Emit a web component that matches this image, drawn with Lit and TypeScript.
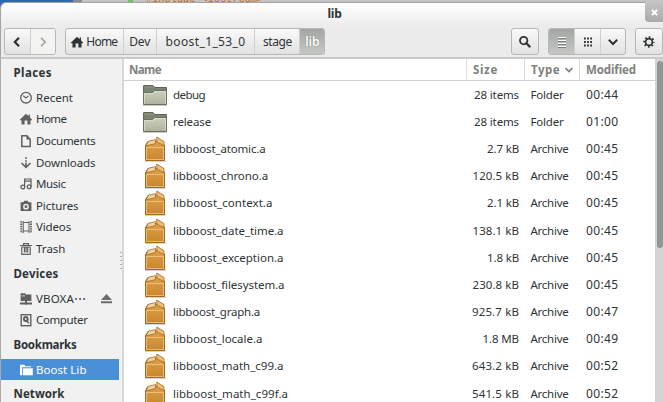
import { LitElement, html, css, svg, nothing } from "lit";
import { customElement } from "lit/decorators.js";

const label = (text: string, width: number, cls = "") =>
  html`<span class="t ${cls}" data-w=${width}>${text}</span>`;

const shapes: Record<string, unknown> = {
  recent: svg`<circle cx="6" cy="5.7" r="5.3" fill="none" stroke="currentColor" stroke-width="1.3"/><path d="M3.2 3.7 6 6 8.6 3.9" fill="none" stroke="currentColor" stroke-width="1.1"/>`,
  home: svg`<path d="M6 .8 0 6.4V7.2H1.5V11.5H4.6V7.5H7.4V11.5H10.5V7.2H12V6.4L10 4.5V1.6H8.6V3.2Z" fill="currentColor"/>`,
  documents: svg`<path d="M1.8.8H6.8L10.2 4.2V11.4H1.8Z" fill="none" stroke="currentColor" stroke-width="1.5"/><path d="M6.5.8V4.5H10.2Z" fill="currentColor"/>`,
  downloads: svg`<path d="M6 .3V2M6 3.3V4.7M6 5.6V10M1.5 6 6 10.3 10.5 6" fill="none" stroke="currentColor" stroke-width="1.6"/>`,
  music: svg`<path d="M4.6 9.3V1H11V8.7M4.6 3.2H11" fill="none" stroke="currentColor" stroke-width="1.2"/><circle cx="2.8" cy="9" r="1.9" fill="none" stroke="currentColor" stroke-width="1.3"/><circle cx="9.2" cy="8.8" r="1.9" fill="none" stroke="currentColor" stroke-width="1.3"/>`,
  pictures: svg`<path fill-rule="evenodd" d="M.6 2.3H3.4L4.2.8H7.8L8.6 2.3H11.4V11H.6ZM6 3.8A2.9 2.9 0 1 0 6 9.6 2.9 2.9 0 1 0 6 3.8ZM6 5.3A1.4 1.4 0 1 1 6 8.1 1.4 1.4 0 1 1 6 5.3Z" fill="currentColor"/>`,
  videos: svg`<path d="M3.2.3V12M9 .3V12M3 1.5H9M3 10H9" fill="none" stroke="currentColor" stroke-width="1.1"/><path d="M1.2.3V12M11 .3V12" stroke="currentColor" stroke-width="2" stroke-dasharray="1.3 1"/>`,
  trash: svg`<path d="M0 2.5H12M3.6 2V.7H8.4V2M1.8 4V11.3H10.2V4M4.5 4.6V9.5M6.1 4.6V9.5M7.7 4.6V9.5M1.5 4H10.5" fill="none" stroke="currentColor" stroke-width="1.2"/>`,
  netdrive: svg`<path d="M.6.2H5L6 1.6H11.4V8H.6Z" fill="currentColor"/><path d="M1.5 2.9H5" stroke="#f1f1f1" stroke-width=".8"/><path d="M0 10.5H12M6 8V11.8" stroke="currentColor" stroke-width="1.9"/>`,
  computer: svg`<rect x="1.2" y=".7" width="9.6" height="11" fill="none" stroke="currentColor" stroke-width="1.4"/><circle cx="5.8" cy="5" r="2.9" fill="currentColor"/><circle cx="5.8" cy="5" r=".9" fill="#f1f1f1"/><path d="M6.3 6.5 8.8 9.3" stroke="currentColor" stroke-width="1.5"/>`,
  folder: svg`<path d="M0 11.3V.8H4.4L5.4 2.2H11V3.3H2V11.3Z" fill="currentColor"/><path d="M2.8 4.3H12.8V11.3H2.8Z" fill="currentColor"/>`,
  back: svg`<path d="M8 1.8 3.8 6 8 10.2" fill="none" stroke="currentColor" stroke-width="2.2"/>`,
  forward: svg`<path d="M4 1.8 8.2 6 4 10.2" fill="none" stroke="currentColor" stroke-width="1.7"/>`,
  search: svg`<circle cx="4.7" cy="4.6" r="3.7" fill="none" stroke="currentColor" stroke-width="1.8"/><path d="M7.4 7.3 11.3 11.2" stroke="currentColor" stroke-width="2.3"/>`,
  list: svg`<path d="M2 2.5H10M2 5.5H10M2 8.5H10M2 11.5H10" stroke="#7d817d" stroke-width="1"/><path d="M2 1.5H10M2 4.5H10M2 7.5H10M2 10.5H10" stroke="#fff" stroke-width="1.2"/>`,
  grid: svg`<path d="M2 2.5H10M2 6H10M2 9.5H10" stroke="currentColor" stroke-width="1.8" stroke-dasharray="1.8 1.3"/>`,
  down: svg`<path d="M1.8 3.8 6 8 10.2 3.8" fill="none" stroke="currentColor" stroke-width="2"/>`,
  gear: svg`<circle cx="6" cy="6" r="3.4" fill="none" stroke="currentColor" stroke-width="1.7"/><circle cx="6" cy="6" r="4.8" fill="none" stroke="currentColor" stroke-width="1.8" stroke-dasharray="1.7 2.07" stroke-dashoffset=".85"/>`,
  close: svg`<path d="M2.5 2.5 9.5 9.5M9.5 2.5 2.5 9.5" stroke="currentColor" stroke-width="2.8"/>`,
};
const icon = (name: string, cls = "") =>
  html`<svg class="ic ${cls}" viewBox="0 0 12 12">${shapes[name]}</svg>`;

const folderArt = html`<svg class="art" viewBox="0 0 26 26">
  <defs><linearGradient id="f" x2="0" y2="1"><stop stop-color="#cdd0bf"/><stop offset="1" stop-color="#aeb19c"/></linearGradient></defs>
  <path d="M1 23.5H25" stroke="#000" stroke-opacity=".2"/>
  <path d="M1.5 14V4Q1.5 3.5 2 3.5H11L13 5.5H24.5V14Z" fill="#7d8371" stroke="#5f6455"/>
  <path d="M3 5H11" stroke="#939986"/>
  <path d="M1.5 22.5V10.5H10.5L12.5 8.5H24.5V22.5Z" fill="url(#f)" stroke="#6c705f"/>
  <path d="M2.5 21.5V11.5H11L13 9.5H23.5V21.5" fill="none" stroke="#e0e2d6" stroke-opacity=".7"/></svg>`;

const boxArt = html`<svg class="art" viewBox="0 0 26 26">
  <defs><linearGradient id="b" x2="0" y2="1"><stop stop-color="#dfa04a"/><stop offset="1" stop-color="#c8862c"/></linearGradient></defs>
  <path d="M3 25.2H24" stroke="#000" stroke-opacity=".25"/>
  <path d="M3.5 24.5V9.5L6 5.5H20L22.5 9.5V24.5Z" fill="url(#b)" stroke="#a8681a"/>
  <path d="M4.5 23.5V11.5H21.5V23.5Z" fill="none" stroke="#f0cb90" stroke-opacity=".75"/>
  <path d="M6.5 5.2 13.5 3.6V7.6L4 9.8Z" fill="#f0d3a4" stroke="#a8691b" stroke-width=".8"/>
  <path d="M14.8 1 22 5.6V9.6L14.8 6Z" fill="#e9bd7c" stroke="#a8691b" stroke-width=".8"/></svg>`;

type Place = { icon: string; name: string; w: number; on?: boolean; eject?: boolean };
const groups: { title: string; w: number; items: Place[] }[] = [
  { title: "Places", w: 38.5, items: [
    { icon: "recent", name: "Recent", w: 37 },
    { icon: "home", name: "Home", w: 30.5 },
    { icon: "documents", name: "Documents", w: 59.5 },
    { icon: "downloads", name: "Downloads", w: 59.5 },
    { icon: "music", name: "Music", w: 29.5 },
    { icon: "pictures", name: "Pictures", w: 42.5 },
    { icon: "videos", name: "Videos", w: 35 },
    { icon: "trash", name: "Trash", w: 29.5 } ] },
  { title: "Devices", w: 45, items: [
    { icon: "netdrive", name: "VBOXA⋯", w: 50, eject: true },
    { icon: "computer", name: "Computer", w: 51.5 } ] },
  { title: "Bookmarks", w: 63, items: [{ icon: "folder", name: "Boost Lib", w: 50.5, on: true }] },
  { title: "Network", w: 51, items: [] },
];

const files: [string, number, string, number, string][] = [
  ["debug", 32, "28 items", 45, "00:44"],
  ["release", 38, "28 items", 45, "01:00"],
  ["libboost_atomic.a", 92.5, "2.7 kB", 32, "00:45"],
  ["libboost_chrono.a", 95, "120.5 kB", 46.5, "00:45"],
  ["libboost_context.a", 99.5, "2.1 kB", 32, "00:45"],
  ["libboost_date_time.a", 110.5, "138.1 kB", 46.5, "00:45"],
  ["libboost_exception.a", 110.5, "1.8 kB", 32, "00:45"],
  ["libboost_filesystem.a", 111.5, "230.8 kB", 46.5, "00:45"],
  ["libboost_graph.a", 87, "925.7 kB", 47, "00:47"],
  ["libboost_locale.a", 89.5, "1.8 MB", 36.5, "00:49"],
  ["libboost_math_c99.a", 110.5, "643.2 kB", 47, "00:52"],
  ["libboost_math_c99f.a", 115, "541.5 kB", 47, "00:52"],
];

@customElement("app-root")
export class AppRoot extends LitElement {
  static styles = css`
    :host { display: block; width: 663px; height: 402px; overflow: hidden; position: relative;
      font: 11.5px/16px "Noto Sans", "Open Sans", sans-serif; color: #2e3436; background: #c4c4c4; }
    * { box-sizing: border-box; }
    .t { display: inline-block; white-space: pre; flex: none; }
    .ic { width: 12px; height: 12px; flex: none; overflow: visible; display: block; }
    .desk { position: absolute; inset: 0 0 auto 0; height: 8px; display: flex; overflow: hidden; }
    .wall { width: 73px; background: #2d67ad; }
    .edge { width: 9px; background: #8e8e8e; }
    .mark { width: 5px; margin-left: 46px; background: #6cc36a; }
    .code { margin: -7px 0 0 13px; font: 10.3px/12px "Liberation Mono", monospace; color: #c96a12; }
    .win { position: relative; height: 402px; padding-top: 1.5px; display: flex; flex-direction: column; }
    .head { height: 57.5px; flex: none; border: 1px solid #a3a3a3; border-right: 0; border-bottom: 2px solid #c9c9c9;
      border-radius: 6px 0 0 0; background: linear-gradient(#fff, #ebebeb 24px, #ebebeb); }
    .title { height: 25.5px; padding-top: 3.5px; text-align: center; font-weight: 700; padding-left: 5px; font-size: 12px; }
    .tools { display: flex; height: 27px; padding-left: 3px; font-size: 12px; }
    .grp { display: flex; border: 1px solid #b7b7b5; border-radius: 3px; background: linear-gradient(#f9f9f9, #e2e2e2); overflow: hidden; }
    .b { display: flex; align-items: center; justify-content: center; border-left: 1px solid #cfcfcf; }
    .b:first-child { border-left: 0; }
    .off { background: #f3f3f1; color: #a5a5a5; }
    .act { background: linear-gradient(#a2a6a2, #c6c8c6); color: #fff; text-shadow: 0 0 1px #666; }
    .paths .act { font-weight: 600; }
    .w25 { width: 25px; } .w26 { width: 26px; } .crumb0 { width: 57px; gap: 3px; } .w33 { width: 33px; }
    .w99 { width: 99px; } .w45 { width: 45px; }
    .paths { margin-left: 9px; } .find { margin-left: 186px; width: 28px; } .views { margin-left: 9px; } .cfg { margin-left: 9px; width: 28px; }
    .close { position: absolute; right: 0; top: 2px; width: 18px; height: 20px; border-radius: 0 0 0 4px; background: linear-gradient(#c4c4c4, #aaa);
      color: #fff; display: flex; align-items: center; justify-content: center; }
    .close .ic { width: 9px; height: 9px; }
    .main { flex: 1; display: flex; min-height: 0; }
    .side { width: 121px; flex: none; background: #f1f1f1; border-left: 1px solid #a9a9a9; overflow: hidden; padding-top: 3.1px; }
    .gh { height: 24.7px; padding: 3px 0 0 12.5px; font-weight: 700; }
    .gi { margin-bottom: 3.1px; }
    .pl { height: 21.65px; width: 118px; padding: 0 0 0 19px; display: flex; align-items: center; gap: 4px; }
    .pl .ic { color: #5f615e; }
    .on, .on .ic { color: #fff; }
    .on { background: #4a90d9; }
    .eject { width: 11px; height: 11px; margin-left: auto; margin-right: 7px; color: #6b6d6b; }
    .sash { width: 3px; flex: none; background: #f1f1f1; border-right: 2px solid #d8d8d8; }
    .grip { position: absolute; left: 120px; top: 252px; width: 2px; height: 20px;
      background: repeating-linear-gradient(#b0b0b0 0 1.5px, transparent 1.5px 4px); }
    .list { flex: 1; background: #fff; overflow: hidden; }
    .row { display: grid; grid-template-columns: 342px 58px 55px 1fr; height: 27.2px; align-items: center; }
    .cols { height: 22px; border-bottom: 1px solid #cfcfcf; color: #7f817e; font-weight: 700; align-items: stretch; }
    .cols > div { padding: 3px 0 0 6px; display: flex; gap: 4px; border-left: 1px solid #dcdcdc; }
    .cols > div:first-child { border-left: 0; padding-left: 5px; }
    .cols .ic { width: 10px; height: 10px; margin-top: 3px; }
    .name { display: flex; align-items: center; padding-left: 18px; gap: 5px; }
    .art { width: 26px; height: 26px; flex: none; }
    .size { text-align: right; padding-right: 5px; }
    .kind { padding-left: 6.5px; }
    .time { padding-left: 7px; font-size: 12px; }
    .bar { width: 8px; flex: none; background: #d4d4d4; padding: 2px 0 0 2px; }
    .thumb { height: 187px; border-radius: 4px; background: #949696; }
  `;

  // Tracks each label so its text fills its designed width.
  updated() {
    this.renderRoot.querySelectorAll<HTMLElement>(".t").forEach((el) => {
      const w = Number(el.dataset.w);
      el.style.letterSpacing = "0";
      const natural = el.getBoundingClientRect().width;
      el.style.letterSpacing = `${(w - natural) / (el.textContent || " ").length}px`;
    });
  }

  render() {
    return html`
      <div class="desk"><div class="wall"></div><div class="edge"></div><div class="mark"></div><div class="code">#include &lt;iostream&gt;</div></div>
      <div class="win">
        <div class="head">
          <div class="title">${label("lib", 14)}</div>
          <div class="tools">
            <div class="grp"><div class="b w25">${icon("back")}</div><div class="b w25 off">${icon("forward")}</div></div>
            <div class="grp paths">
              <div class="b crumb0">${icon("home")}${label("Home", 31)}</div>
              <div class="b w33">${label("Dev", 21)}</div>
              <div class="b w99">${label("boost_1_53_0", 80)}</div>
              <div class="b w45">${label("stage", 29)}</div>
              <div class="b w25 act">${label("lib", 14)}</div>
            </div>
            <div class="grp find"><div class="b w26">${icon("search")}</div></div>
            <div class="grp views"><div class="b w25 act">${icon("list")}</div><div class="b w26">${icon("grid")}</div><div class="b w25">${icon("down")}</div></div>
            <div class="grp cfg"><div class="b w26">${icon("gear")}</div></div>
          </div>
        </div>
        <div class="close">${icon("close")}</div>
        <div class="main">
          <div class="side">
            ${groups.map((g) => html`<div class="gh">${label(g.title, g.w)}</div><div class="gi">
              ${g.items.map((p) => html`<div class="pl ${p.on ? "on" : ""}">${icon(p.icon)}${label(p.name, p.w)}
                ${p.eject ? html`<svg class="eject" viewBox="0 0 11 11"><path d="M5.5 1 11 7H0ZM0 8.3H11V10.3H0Z" fill="currentColor"/></svg>` : nothing}</div>`)}</div>`)}
          </div>
          <div class="sash"></div>
          <div class="list">
            <div class="row cols"><div>${label("Name", 32)}</div><div>${label("Size", 25)}</div><div>${label("Type", 29)}${icon("down")}</div><div>${label("Modified", 50)}</div></div>
            ${files.map(([n, w, s, sw, t]) => html`<div class="row">
              <div class="name">${n.includes(".") ? boxArt : folderArt}${label(n, w)}</div>
              <div class="size">${label(s, sw)}</div>
              <div class="kind">${n.includes(".") ? label("Archive", 38) : label("Folder", 33)}</div>
              <div class="time">${label(t, 32.5)}</div></div>`)}
          </div>
          <div class="bar"><div class="thumb"></div></div>
        </div>
        <div class="grip"></div>
      </div>`;
  }
}
